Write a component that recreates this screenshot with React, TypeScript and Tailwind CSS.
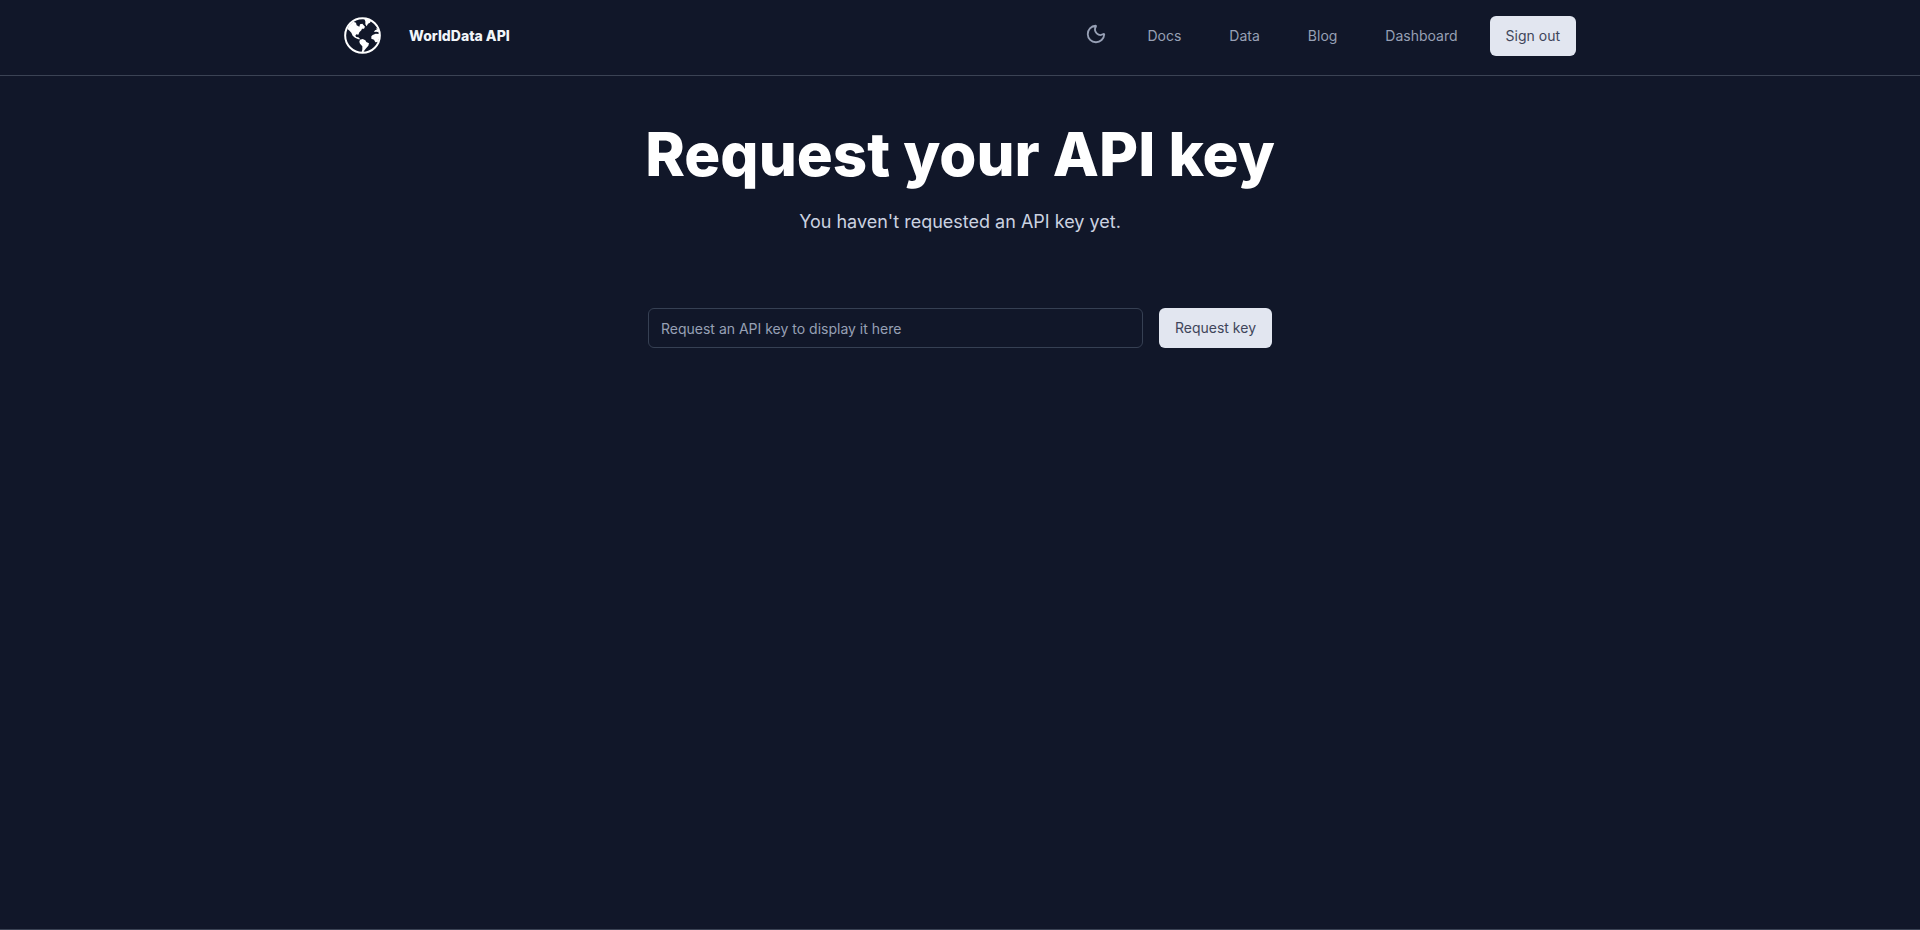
import { Moon } from "lucide-react";

const links = ["Docs", "Data", "Blog", "Dashboard"];

const buttonClass =
  "inline-flex h-10 shrink-0 items-center justify-center rounded-md bg-[#e2e6f0] px-4 text-sm text-[#3f455a] hover:bg-slate-300";

function Globe() {
  return (
    <svg viewBox="0 0 111 111" className="mb-px size-[37px] text-white" aria-hidden="true">
      <circle cx="55.5" cy="55.5" r="52" fill="none" stroke="currentColor" strokeWidth="6" />
      <g fill="currentColor">
        <path d="M10 36 L17 23 L28 14 L36 17 L38 25 L46 29 L48 22 L55 20 L63 29 L60 35 L54 35 L52 40 L46 46 L43 53 L37 52 L34 56 L37 60 L43 61 L49 67 L43 67 L33 62 L26 56 L22 47 L15 40 Z" />
        <path d="M60 4 L82 9 L78 17 L72 20 L68 28 L64 22 L64 13 Z" />
        <path d="M48 68 L56 66 L64 70 L67 75 L75 79 L73 86 L67 93 L62 99 L58 106 L53 106 L55 97 L55 88 L48 80 L46 74 Z" />
        <path d="M86 54 L95 50 L106 51 L107 60 L101 75 L94 76 L90 68 L82 65 L82 58 Z" />
        <path d="M90 45 L93 40 L98 38 L97 32 L103 38 L105 46 L97 44 Z" />
      </g>
    </svg>
  );
}

export default function App() {
  return (
    <div className="flex min-h-screen flex-col bg-[#111729] font-['Inter',sans-serif] text-white antialiased">
      <header className="border-b border-[#3b4354]">
        <div className="mx-auto flex h-[75px] w-full max-w-7xl items-start justify-between px-6 pt-4">
          <a href="#home" className="flex h-10 items-center gap-7">
            <Globe />
            <span className="text-sm font-extrabold text-slate-100">WorldData API</span>
          </a>
          <nav className="flex h-10 items-center gap-4">
            <button type="button" aria-label="Toggle theme" className="px-2 pb-1 text-[#97a0b5]">
              <Moon size={22} strokeWidth={2} />
            </button>
            {links.map((label) => (
              <a key={label} href={`#${label.toLowerCase()}`} className="px-4 text-sm text-[#97a0b5] hover:text-white">
                {label}
              </a>
            ))}
            <button type="button" className={buttonClass}>
              Sign out
            </button>
          </nav>
        </div>
      </header>
      <main className="flex flex-1 flex-col items-center px-6 pt-12">
        <h1 className="text-center text-6xl font-extrabold leading-[60px]">Request your API key</h1>
        <p className="mt-6 text-center text-lg text-[#cbd2e0]">You haven't requested an API key yet.</p>
        <form className="mt-[72px] flex w-full max-w-[624px] gap-4" onSubmit={(e) => e.preventDefault()}>
          <input
            type="text"
            readOnly
            aria-label="API key"
            placeholder="Request an API key to display it here"
            className="h-10 min-w-0 flex-1 rounded-md border border-[#364053] bg-transparent px-3 text-sm placeholder:text-[#97a0b5]"
          />
          <button type="submit" className={buttonClass}>
            Request key
          </button>
        </form>
      </main>
      <footer className="border-t border-[#3b4354]" />
    </div>
  );
}
